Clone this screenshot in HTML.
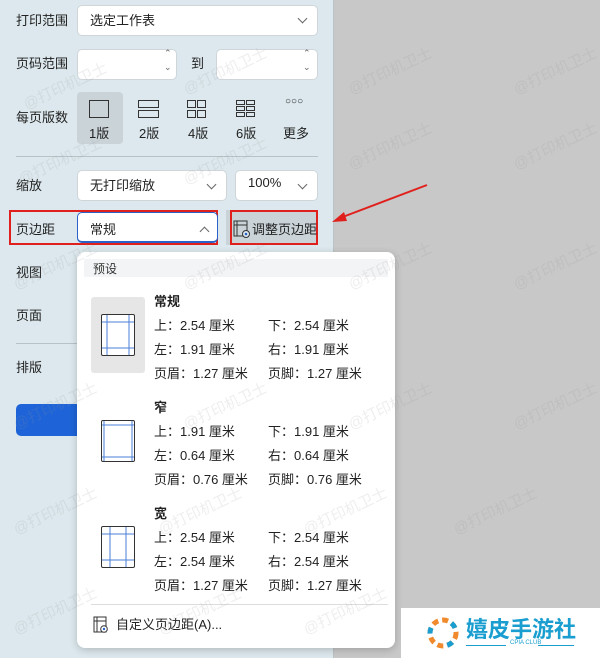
<html><head><style>
body{margin:0;width:600px;height:658px;position:relative;overflow:hidden;background:#c8c8c8;font-family:"Liberation Sans","Noto Sans CJK SC",sans-serif;font-size:13px;color:#222}
.l{position:absolute;left:0;top:0;width:333px;height:658px;background:#dce8ed;border-right:1px solid #b9c2c6}
.a{position:absolute}
.box{position:absolute;background:#fff;border:1px solid #cfd6da;border-radius:5px;box-sizing:border-box}
.chev{position:absolute;width:6px;height:6px;border-right:1.1px solid #666;border-bottom:1.1px solid #666;transform:rotate(45deg)}
.t{position:absolute;white-space:nowrap;margin-top:-2px}
.wm{position:absolute;color:rgba(150,150,150,.16);font-size:15px;transform:rotate(-25deg);white-space:nowrap}
</style></head><body>
<div class="l"></div>
<div class="t" style="left:16px;top:12px">打印范围</div>
<div class="box" style="left:77px;top:5px;width:241px;height:31px"></div><div class="t" style="left:90px;top:12px">选定工作表</div><div class="chev" style="left:299px;top:15px"></div>
<div class="t" style="left:16px;top:55px">页码范围</div>
<div class="box" style="left:77px;top:49px;width:100px;height:31px"></div><div class="t" style="left:164px;top:50px;font-size:9px;color:#666">⌃</div><div class="t" style="left:164px;top:64px;font-size:9px;color:#666">⌄</div>
<div class="t" style="left:191px;top:55px">到</div>
<div class="box" style="left:216px;top:49px;width:102px;height:31px"></div><div class="t" style="left:303px;top:50px;font-size:9px;color:#666">⌃</div><div class="t" style="left:303px;top:64px;font-size:9px;color:#666">⌄</div>
<div class="t" style="left:16px;top:109px">每页版数</div>
<div class="a" style="left:77px;top:92px;width:46px;height:52px;background:#c9d3d8;border-radius:4px"></div>
<div class="a" style="left:89px;top:100px;width:18px;height:16px;border:1.3px solid #333"></div>
<div class="a" style="left:138px;top:100px;width:19px;height:6px;border:1.2px solid #333"></div><div class="a" style="left:138px;top:110px;width:19px;height:6px;border:1.2px solid #333"></div>
<div class="a" style="left:187px;top:100px;width:7px;height:6px;border:1.2px solid #333"></div><div class="a" style="left:197px;top:100px;width:7px;height:6px;border:1.2px solid #333"></div><div class="a" style="left:187px;top:110px;width:7px;height:6px;border:1.2px solid #333"></div><div class="a" style="left:197px;top:110px;width:7px;height:6px;border:1.2px solid #333"></div>
<div class="a" style="left:236px;top:100px;width:7px;height:3px;border:1.2px solid #333"></div><div class="a" style="left:246px;top:100px;width:7px;height:3px;border:1.2px solid #333"></div><div class="a" style="left:236px;top:106px;width:7px;height:3px;border:1.2px solid #333"></div><div class="a" style="left:246px;top:106px;width:7px;height:3px;border:1.2px solid #333"></div><div class="a" style="left:236px;top:112px;width:7px;height:3px;border:1.2px solid #333"></div><div class="a" style="left:246px;top:112px;width:7px;height:3px;border:1.2px solid #333"></div>
<div class="t" style="left:285px;top:98px;font-size:10px;letter-spacing:0px">○○○</div>
<div class="t" style="left:89px;top:125px">1版</div><div class="t" style="left:139px;top:125px">2版</div><div class="t" style="left:188px;top:125px">4版</div><div class="t" style="left:236px;top:125px">6版</div><div class="t" style="left:283px;top:125px">更多</div>
<div class="a" style="left:16px;top:156px;width:302px;height:1px;background:#b8c2c6"></div>
<div class="t" style="left:16px;top:177px">缩放</div>
<div class="box" style="left:77px;top:170px;width:150px;height:31px"></div><div class="t" style="left:90px;top:177px">无打印缩放</div><div class="chev" style="left:208px;top:181px"></div>
<div class="box" style="left:235px;top:170px;width:83px;height:31px"></div><div class="t" style="left:248px;top:177px">100%</div><div class="chev" style="left:299px;top:181px"></div>
<div class="a" style="left:9px;top:210px;width:209px;height:35px;border:2px solid #e0201c;box-sizing:border-box"></div>
<div class="t" style="left:16px;top:221px">页边距</div>
<div class="box" style="left:77px;top:212px;width:141px;height:31px;border:1px solid #2a62c9;border-bottom:2px solid #2a62c9"></div><div class="t" style="left:90px;top:221px">常规</div><div class="chev" style="left:201px;top:228px;transform:rotate(225deg)"></div>
<div class="a" style="left:226px;top:210px;width:92px;height:35px;background:#c9d3d8"></div>
<div class="a" style="left:230px;top:210px;width:88px;height:35px;border:2px solid #e0201c;box-sizing:border-box"></div>
<svg class="a" style="left:233px;top:220px" width="18" height="18"><rect x="1" y="1" width="13" height="15" fill="none" stroke="#333"/><line x1="4" y1="1" x2="4" y2="16" stroke="#333"/><line x1="1" y1="5" x2="14" y2="5" stroke="#333"/><circle cx="13" cy="14" r="3.5" fill="#dce8ed" stroke="#333"/><circle cx="13" cy="14" r="1.3" fill="#2a62c9"/></svg>
<div class="t" style="left:252px;top:221px">调整页边距</div>
<svg class="a" style="left:330px;top:182px" width="100" height="42"><line x1="97" y1="3" x2="10" y2="36" stroke="#e0201c" stroke-width="2"/><polygon points="2,40 14,30 17,39" fill="#e0201c"/></svg>
<div class="t" style="left:16px;top:264px">视图</div><div class="t" style="left:16px;top:307px">页面</div>
<div class="a" style="left:16px;top:343px;width:62px;height:1px;background:#b8c2c6"></div>
<div class="t" style="left:16px;top:359px">排版</div>
<div class="a" style="left:16px;top:404px;width:70px;height:32px;background:#1e64d8;border-radius:5px"></div>
<div class="wm" style="left:20px;top:75px">@打印机卫士</div><div class="wm" style="left:180px;top:60px">@打印机卫士</div><div class="wm" style="left:345px;top:60px">@打印机卫士</div><div class="wm" style="left:510px;top:60px">@打印机卫士</div>
<div class="wm" style="left:15px;top:150px">@打印机卫士</div><div class="wm" style="left:180px;top:150px">@打印机卫士</div><div class="wm" style="left:345px;top:135px">@打印机卫士</div><div class="wm" style="left:510px;top:135px">@打印机卫士</div>
<div class="a" style="left:77px;top:252px;width:318px;height:396px;background:#fff;border-radius:8px;box-shadow:0 2px 8px rgba(0,0,0,.2)"></div>
<div class="a" style="left:84px;top:259px;width:304px;height:18px;background:#f3f4f6"></div>
<div class="t" style="left:93px;top:262px;font-size:12px;color:#333">预设</div>
<div class="a" style="left:91px;top:297px;width:54px;height:76px;background:#e6e6e6;border-radius:3px"></div>
<svg class="a" style="left:100px;top:313px" width="36" height="44"><rect x="1.5" y="1.5" width="33" height="41" rx="1.5" fill="#fff" stroke="#333"/><g stroke="#4a7fd8"><line x1="7" y1="2" x2="7" y2="42"/><line x1="29" y1="2" x2="29" y2="42"/><line x1="2" y1="9" x2="34" y2="9"/><line x1="2" y1="35" x2="34" y2="35"/></g></svg>
<svg class="a" style="left:100px;top:419px" width="36" height="44"><rect x="1.5" y="1.5" width="33" height="41" rx="1.5" fill="#fff" stroke="#333"/><g stroke="#4a7fd8"><line x1="4" y1="2" x2="4" y2="42"/><line x1="32" y1="2" x2="32" y2="42"/><line x1="2" y1="6" x2="34" y2="6"/><line x1="2" y1="38" x2="34" y2="38"/></g></svg>
<svg class="a" style="left:100px;top:525px" width="36" height="44"><rect x="1.5" y="1.5" width="33" height="41" rx="1.5" fill="#fff" stroke="#333"/><g stroke="#4a7fd8"><line x1="10" y1="2" x2="10" y2="42"/><line x1="26" y1="2" x2="26" y2="42"/><line x1="2" y1="9" x2="34" y2="9"/><line x1="2" y1="35" x2="34" y2="35"/></g></svg>
<div class="t" style="left:154px;top:293px;font-weight:bold">常规</div>
<div class="t" style="left:154px;top:317px">上：2.54 厘米</div><div class="t" style="left:268px;top:317px">下：2.54 厘米</div>
<div class="t" style="left:154px;top:341px">左：1.91 厘米</div><div class="t" style="left:268px;top:341px">右：1.91 厘米</div>
<div class="t" style="left:154px;top:365px">页眉：1.27 厘米</div><div class="t" style="left:268px;top:365px">页脚：1.27 厘米</div>
<div class="t" style="left:154px;top:399px;font-weight:bold">窄</div>
<div class="t" style="left:154px;top:423px">上：1.91 厘米</div><div class="t" style="left:268px;top:423px">下：1.91 厘米</div>
<div class="t" style="left:154px;top:447px">左：0.64 厘米</div><div class="t" style="left:268px;top:447px">右：0.64 厘米</div>
<div class="t" style="left:154px;top:471px">页眉：0.76 厘米</div><div class="t" style="left:268px;top:471px">页脚：0.76 厘米</div>
<div class="t" style="left:154px;top:505px;font-weight:bold">宽</div>
<div class="t" style="left:154px;top:529px">上：2.54 厘米</div><div class="t" style="left:268px;top:529px">下：2.54 厘米</div>
<div class="t" style="left:154px;top:553px">左：2.54 厘米</div><div class="t" style="left:268px;top:553px">右：2.54 厘米</div>
<div class="t" style="left:154px;top:577px">页眉：1.27 厘米</div><div class="t" style="left:268px;top:577px">页脚：1.27 厘米</div>
<div class="a" style="left:91px;top:604px;width:297px;height:1px;background:#ddd"></div>
<svg class="a" style="left:93px;top:616px" width="16" height="18"><rect x="1" y="1" width="12" height="15" fill="none" stroke="#333"/><line x1="4" y1="1" x2="4" y2="16" stroke="#333"/><line x1="1" y1="5" x2="13" y2="5" stroke="#333"/><circle cx="11" cy="13" r="3.3" fill="#fff" stroke="#333"/><circle cx="11" cy="13" r="1.2" fill="#2a62c9"/></svg>
<div class="t" style="left:116px;top:616px">自定义页边距(A)...</div>
<div class="wm" style="left:10px;top:500px">@打印机卫士</div><div class="wm" style="left:155px;top:500px">@打印机卫士</div><div class="wm" style="left:300px;top:500px">@打印机卫士</div><div class="wm" style="left:450px;top:500px">@打印机卫士</div>
<div class="wm" style="left:10px;top:600px">@打印机卫士</div><div class="wm" style="left:155px;top:600px">@打印机卫士</div><div class="wm" style="left:300px;top:600px">@打印机卫士</div>
<div class="wm" style="left:10px;top:395px">@打印机卫士</div><div class="wm" style="left:180px;top:395px">@打印机卫士</div><div class="wm" style="left:345px;top:395px">@打印机卫士</div><div class="wm" style="left:510px;top:395px">@打印机卫士</div>
<div class="wm" style="left:10px;top:255px">@打印机卫士</div><div class="wm" style="left:180px;top:255px">@打印机卫士</div><div class="wm" style="left:345px;top:255px">@打印机卫士</div><div class="wm" style="left:510px;top:255px">@打印机卫士</div>
<div class="a" style="left:401px;top:608px;width:199px;height:50px;background:#fff"></div>
<svg class="a" style="left:425px;top:615px" width="36" height="36"><g stroke-width="5" fill="none"><circle cx="18" cy="18" r="13" stroke="#f08a2c" stroke-dasharray="6 4"/><circle cx="18" cy="18" r="13" stroke="#1a9ed0" stroke-dasharray="6 24" stroke-dashoffset="-10"/></g></svg>
<div class="t" style="left:466px;top:614px;font-size:22px;font-weight:bold;color:#1a9ed0">嬉皮手游社</div>
<div class="t" style="left:510px;top:642px;font-size:6px;color:#1a9ed0">CPIA CLUB</div>
<div class="a" style="left:466px;top:645px;width:40px;height:1px;background:#1a9ed0"></div><div class="a" style="left:538px;top:645px;width:36px;height:1px;background:#1a9ed0"></div>
</body></html>
